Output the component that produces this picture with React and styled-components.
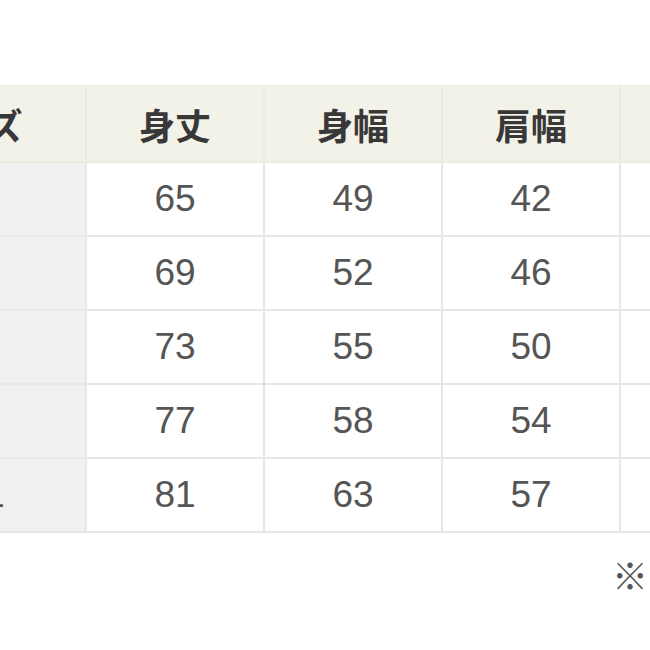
import styled, { createGlobalStyle } from "styled-components";

const Global = createGlobalStyle`
  html, body {
    margin: 0;
    padding: 0;
    background: #ffffff;
  }
`;

const sizes = [
  { name: "S", values: [65, 49, 42, 20] },
  { name: "M", values: [69, 52, 46, 21] },
  { name: "L", values: [73, 55, 50, 22] },
  { name: "XL", values: [77, 58, 54, 23] },
  { name: "XXL", values: [81, 63, 57, 24] },
];

const heads = ["身丈", "身幅", "肩幅", "袖丈"];

export default function App() {
  return (
    <Page>
      <Global />
      <Sheet>
        <SizeTable>
          <thead>
            <tr>
              <HeadCell $first>サイズ</HeadCell>
              {heads.map((h) => (
                <HeadCell key={h}>{h}</HeadCell>
              ))}
            </tr>
          </thead>
          <tbody>
            {sizes.map((s) => (
              <tr key={s.name}>
                <NameCell>{s.name}</NameCell>
                {s.values.map((v, i) => (
                  <ValueCell key={i}>{v}</ValueCell>
                ))}
              </tr>
            ))}
          </tbody>
        </SizeTable>
        <Note>※サイズは平置きで測っています。</Note>
      </Sheet>
    </Page>
  );
}

const Page = styled.div`
  width: 650px;
  height: 650px;
  overflow: hidden;
  background: #ffffff;
`;

const Sheet = styled.div`
  padding-top: 85px;
  margin-left: -149px;
  width: 1000px;
`;

const SizeTable = styled.table`
  border-collapse: collapse;
  table-layout: fixed;
  font-family: "Liberation Sans", Arial, sans-serif;

  tbody tr {
    height: 74px;
  }
`;

const HeadCell = styled.th`
  width: ${(p) => (p.$first ? "232px" : "176px")};
  background: #f3f2e8;
  border: 2px solid #ecebe2;
  border-top: 2px solid #f0f0ec;
  color: #383838;
  font-family: "Noto Sans CJK JP", "Noto Sans", sans-serif;
  font-weight: 700;
  font-size: 36px;
  line-height: 1;
  text-align: center;
  padding: 0;
  height: 74px;
`;

const NameCell = styled.td`
  background: #f0f0f0;
  border: 2px solid #e8e8e8;
  color: #555555;
  font-size: 37px;
  text-align: center;
  padding: 0;
`;

const ValueCell = styled.td`
  background: #ffffff;
  border: 2px solid #e6e6e6;
  color: #555555;
  font-size: 37px;
  text-align: center;
  padding: 0;
`;

const Note = styled.p`
  margin: 23px 0 0 761px;
  font-family: "Noto Sans CJK JP", "Noto Sans", sans-serif;
  font-size: 36px;
  line-height: 36px;
  color: #555555;
  white-space: nowrap;
`;
